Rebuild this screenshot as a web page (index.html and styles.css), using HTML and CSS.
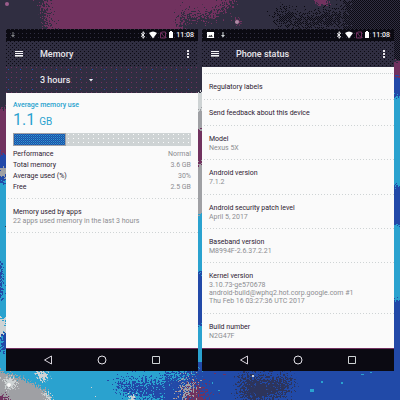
FILE: index.html
```
<!DOCTYPE html>
<html lang="en">
<head>
<meta charset="utf-8">
<meta name="viewport" content="width=device-width, initial-scale=1">
<title>Memory and phone status</title>
<link rel="stylesheet" href="styles.css">
</head>
<body>
<svg class="wallpaper" viewBox="0 0 400 400" preserveAspectRatio="xMidYMid slice" aria-hidden="true">
  <defs>
    <filter id="grain" x="-10%" y="-10%" width="120%" height="120%">
      <feTurbulence type="fractalNoise" baseFrequency="0.55" numOctaves="3" seed="4" result="n"/>
      <feDisplacementMap in="SourceGraphic" in2="n" scale="42" xChannelSelector="R" yChannelSelector="G"/>
    </filter>
    <filter id="fine" x="-10%" y="-10%" width="120%" height="120%">
      <feTurbulence type="fractalNoise" baseFrequency="0.6" numOctaves="2" seed="9" result="n"/>
      <feDisplacementMap in="SourceGraphic" in2="n" scale="14" xChannelSelector="R" yChannelSelector="G"/>
    </filter>
    <pattern id="check" width="2" height="2" patternUnits="userSpaceOnUse">
      <path d="M0 0h1v1H0zM1 1h1v1H1z" fill="#0b0a12"/>
    </pattern>
    <mask id="shade" maskUnits="userSpaceOnUse" x="200" y="0" width="200" height="60">
      <g filter="url(#grain)" fill="#fff">
        <path d="M350-30H430V80H352L342 20z"/>
        <path d="M278 8L300 16 338 10 342 26 300 28 276 24z"/>
      </g>
    </mask>
  </defs>
  <rect width="400" height="400" fill="#302e41"/>
  <g filter="url(#grain)">
    <path d="M42-20H184L182 22 174 50H50z" fill="#71305f"/>
    <path d="M184-20H236L228 8 198 18 180 12z" fill="#71305f"/>
  </g>
  <rect x="200" width="200" height="60" fill="url(#check)" mask="url(#shade)"/>
  <g filter="url(#fine)">
    <path d="M-10 108H10V160H-10z" fill="#71305f"/>
    <path d="M-10 154H10V186H-10z" fill="#214aa8"/>
    <path d="M-10 182H10V420H-10z" fill="#2aa2cf"/>
    <path d="M-10 262H2V300H-10zM2 332H10V352H2z" fill="#214aa8"/>
    <path d="M-10 168H8V176H-10z" fill="#9fa0a4"/>
    <path d="M190 92H210V132H190z" fill="#ced3d4"/>
    <path d="M190 110H210V132H190zM190 163H210V215H190z" fill="#9fa0a4"/>
    <path d="M190 130H210V164H190z" fill="#71305f"/>
    <path d="M190 214H210V375H190z" fill="#2aa2cf"/>
    <path d="M190 272H210V325H190z" fill="#214aa8"/>
    <path d="M390 62H410V80H390z" fill="#71305f"/>
    <path d="M390 77H410V100H390z" fill="#214aa8"/>
    <path d="M390 97H410V310H390z" fill="#2aa2cf"/>
    <path d="M390 185H410V225H390zM390 300H410V380H390z" fill="#214aa8"/>
  </g>
  <path d="M-10 362H190V410H-10z" fill="#2aa2cf"/>
  <path d="M165 362H410V410H165z" fill="#214aa8"/>
  <g filter="url(#grain)">
    <path d="M116 382H205V398L165 401 125 393z" fill="#214aa8"/>
    <path d="M150 366H200L175 379z" fill="#2aa2cf"/>
    <path d="M180 386L192 378 196 396 184 402z" fill="#9fa0a4"/>
    <path d="M192 388L202 382 208 410H180z" fill="#71305f"/>
    <path d="M242 374L262 380 290 376 288 392 258 402 240 398z" fill="#302e41" opacity=".75"/>
  </g>
  <g filter="url(#fine)">
    <path d="M-10 369L14 375 46 390 58 410H-10z" fill="#9fa0a4"/>
    <path d="M2 378L14 379 18 386 8 390zM36 370L48 372 46 382 38 378zM42 392L52 396 50 404z" fill="#ced3d4"/>
    <path d="M-10 389L8 398 14 410H-10z" fill="#71305f"/>
    <path d="M-10 318H6V334H-10z" fill="#ced3d4"/>
    <circle cx="238" cy="22" r="3" fill="#71305f"/>
    <circle cx="214" cy="15" r="3" fill="#71305f"/>
    <path d="M312-4H328V5H318z" fill="#71305f"/>
    <circle cx="132" cy="398" r="3" fill="#ced3d4"/>
  </g>
  <circle cx="9" cy="385" r="2" fill="#fafafa"/>
  <circle cx="7" cy="4" r="2" fill="#9c5d8c"/>
  <circle cx="237" cy="22" r="2" fill="#b08aa6"/>
  <path d="M310 389h4v3h-4zM321 381h2v2h-2zM341 382h2v2h-2zM370 372h2v1h-2zM361 374h3v1h-3zM218 390h2v1h-2zM212 382h1v2h-1z" fill="#2aa2cf"/>
  <path d="M252 375h2v2h-2zM91 387h1v1h-1zM95 396h1v1h-1z" fill="#ced3d4"/>
  <path d="M214 373h2v1h-2zM223 374h3v1h-3zM219 393h1v1h-1zM207 391h1v1h-1z" fill="#71305f"/>
</svg>

<svg class="sprite" aria-hidden="true">
  <symbol id="i-bt" viewBox="0 0 6 8"><path d="M1 2.3L4.7 5.7 3 7.3V.7L4.7 2.3 1 5.7" fill="none" stroke="#f4f4f6" stroke-width="1"/></symbol>
  <symbol id="i-wifi" viewBox="0 0 8 8"><path d="M0 2Q4-1.2 8 2L4 7.5z" fill="#fff"/></symbol>
  <symbol id="i-sim" viewBox="0 0 6 8"><path d="M.5 7V2L2 1H5.500V7zM.5 1.500L5.500 7" fill="none" stroke="#71305f" stroke-width="1"/></symbol>
  <symbol id="i-batt" viewBox="0 0 4 8"><path d="M0 1H1V0H3V1H4V7H0z" fill="#fff"/></symbol>
  <symbol id="i-down" viewBox="0 0 4 8"><path d="M1.500 1H2.500V4H4L2 6.500 0 4H1.500z" fill="#ced3d4"/></symbol>
  <symbol id="i-pic" viewBox="0 0 7 8"><path d="M0 1H7V7H0zM1.200 5.800H5.800L4.300 3.800 3.200 5 2.400 4.300z" fill="#fff" fill-rule="evenodd"/></symbol>
  <symbol id="i-menu" viewBox="0 0 8 8"><path d="M0 1H8V2H0zM0 3H8V4H0zM0 5H8V6H0z" fill="#f4f4f6"/><path d="M0 6H8V7H0z" fill="#9fa0a4"/></symbol>
  <symbol id="i-more" viewBox="0 0 4 8"><path d="M1 0H3V2H1zM1 3H3V5H1zM1 6H3V8H1z" fill="#e6e3e8"/></symbol>
  <symbol id="i-back" viewBox="0 0 10 10"><path d="M8.500 1V9L1.500 5z" fill="none" stroke="#d9d4dc" stroke-width="1"/></symbol>
  <symbol id="i-home" viewBox="0 0 10 10"><circle cx="5" cy="5" r="4" fill="none" stroke="#e4e2e8" stroke-width="1"/></symbol>
  <symbol id="i-recent" viewBox="0 0 10 10"><path d="M1.500 1.500H8.500V8.500H1.500z" fill="none" stroke="#ced3d4" stroke-width="1"/></symbol>
</svg>

<main class="phones">
  <section class="phone" aria-label="Memory">
    <div class="status">
      <svg class="s-down dim"><use href="#i-down"/></svg>
      <span class="status-right">
        <svg class="s-bt"><use href="#i-bt"/></svg>
        <svg class="s-wifi"><use href="#i-wifi"/></svg>
        <svg class="s-sim"><use href="#i-sim"/></svg>
        <svg class="s-batt"><use href="#i-batt"/></svg>
        <time>11:08</time>
      </span>
    </div>
    <header class="toolbar">
      <button type="button" aria-label="Menu"><svg class="s-menu"><use href="#i-menu"/></svg></button>
      <h1>Memory</h1>
      <button type="button" aria-label="More options"><svg class="s-more"><use href="#i-more"/></svg></button>
    </header>
    <div class="period">
      <select aria-label="Period"><option>3 hours</option></select>
      <svg class="caret" viewBox="0 0 4 3" aria-hidden="true"><path d="M0 0H4L2 2.500z" fill="#f4f4f6"/></svg>
    </div>
    <div class="content">
      <div class="summary">
        <h2>Average memory use</h2>
        <p class="amount">1.1 <small>GB</small></p>
        <div class="bar" role="img" aria-label="30% used"><div class="fill"></div></div>
        <table>
          <tr><th scope="row">Performance</th><td>Normal</td></tr>
          <tr><th scope="row">Total memory</th><td>3.6 GB</td></tr>
          <tr><th scope="row">Average used (%)</th><td>30%</td></tr>
          <tr><th scope="row">Free</th><td>2.5 GB</td></tr>
        </table>
      </div>
      <div class="item"><h3>Memory used by apps</h3><p>22 apps used memory in the last 3 hours</p></div>
    </div>
    <nav class="nav">
      <button type="button" aria-label="Back"><svg><use href="#i-back"/></svg></button>
      <button type="button" aria-label="Home"><svg><use href="#i-home"/></svg></button>
      <button type="button" aria-label="Recent apps"><svg><use href="#i-recent"/></svg></button>
    </nav>
  </section>

  <section class="phone" aria-label="Phone status">
    <div class="status">
      <svg class="s-pic"><use href="#i-pic"/></svg>
      <svg class="s-down"><use href="#i-down"/></svg>
      <span class="status-right">
        <svg class="s-bt"><use href="#i-bt"/></svg>
        <svg class="s-wifi"><use href="#i-wifi"/></svg>
        <svg class="s-sim"><use href="#i-sim"/></svg>
        <svg class="s-batt"><use href="#i-batt"/></svg>
        <time>11:08</time>
      </span>
    </div>
    <header class="toolbar">
      <button type="button" aria-label="Menu"><svg class="s-menu"><use href="#i-menu"/></svg></button>
      <h1>Phone status</h1>
      <button type="button" aria-label="More options"><svg class="s-more"><use href="#i-more"/></svg></button>
    </header>
    <div class="content list">
      <div class="item single"><h3>Regulatory labels</h3></div>
      <div class="item single"><h3>Send feedback about this device</h3></div>
      <div class="item"><h3>Model</h3><p>Nexus 5X</p></div>
      <div class="item"><h3>Android version</h3><p>7.1.2</p></div>
      <div class="item"><h3>Android security patch level</h3><p>April 5, 2017</p></div>
      <div class="item"><h3>Baseband version</h3><p>M8994F-2.6.37.2.21</p></div>
      <div class="item"><h3>Kernel version</h3><p>3.10.73-ge570678<br>android-build@wphq2.hot.corp.google.com #1<br>Thu Feb 16 03:27:36 UTC 2017</p></div>
      <div class="item"><h3>Build number</h3><p>N2G47F</p></div>
    </div>
    <nav class="nav">
      <button type="button" aria-label="Back"><svg><use href="#i-back"/></svg></button>
      <button type="button" aria-label="Home"><svg><use href="#i-home"/></svg></button>
      <button type="button" aria-label="Recent apps"><svg><use href="#i-recent"/></svg></button>
    </nav>
  </section>
</main>
</body>
</html>
```
FILE: styles.css
```
* { box-sizing: border-box; }

:root {
  --dark: #302e41;
  --black: #0b0a12;
  --plum: #71305f;
  --cyan: #2aa2cf;
  --blue: #214aa8;
  --paper: #fafafa;
}

body {
  margin: 0;
  position: relative;
  min-height: 100vh;
  font-family: Roboto, "Liberation Sans", sans-serif;
  background: var(--dark);
}

h1, h2, h3, p { margin: 0; }
svg { display: block; }

button {
  display: block;
  padding: 0;
  border: 0;
  background: none;
}

.wallpaper {
  position: absolute;
  inset: 0;
  width: 100%;
  height: 100%;
}

.sprite {
  position: absolute;
  width: 0;
  height: 0;
}

.phones {
  position: relative;
  display: flex;
  gap: 4px;
  min-height: 100vh;
  padding: 29px 6px;
}

.phone {
  flex: 1;
  min-width: 0;
  display: flex;
  flex-direction: column;
}

/* Status bar */
.status {
  display: flex;
  align-items: center;
  gap: 7px;
  height: 12px;
  padding: 0 4px 0 5px;
  background:
    conic-gradient(at 1px 1px, transparent 75%, var(--dark) 0) 0 0 / 4px 4px,
    var(--black);
}

.s-down { width: 4px; height: 8px; }
.s-pic { width: 7px; height: 8px; }
.s-bt, .s-sim { width: 6px; height: 8px; }
.s-wifi { width: 8px; height: 8px; }
.s-batt { width: 4px; height: 8px; }
.dim { opacity: .6; }

.status-right {
  display: flex;
  align-items: center;
  gap: 3px;
  margin-left: auto;
}

.status time {
  font-size: 7px;
  font-weight: 500;
  line-height: 12px;
  color: #f4f4f6;
}

/* Toolbar */
.toolbar {
  display: flex;
  align-items: center;
  height: 26px;
  padding: 0 8px 0 9px;
  background:
    conic-gradient(at 1px 1px, transparent 75%, var(--black) 0) 0 0 / 4px 4px,
    conic-gradient(at 1px 1px, transparent 75%, var(--black) 0) 2px 2px / 4px 4px,
    var(--dark);
}

.toolbar h1 {
  flex: 1;
  margin-left: 17px;
  font-size: 9px;
  font-weight: 500;
  line-height: 12px;
  color: #e8e6ea;
}

.s-menu { width: 8px; height: 8px; }
.s-more { width: 4px; height: 8px; }

.period {
  display: flex;
  align-items: center;
  height: 26px;
  padding-left: 34px;
  background:
    conic-gradient(at 1px 1px, transparent 75%, var(--plum) 0) 0 0 / 5px 5px,
    conic-gradient(at 1px 1px, transparent 75%, var(--blue) 0) 2px 2px / 12px 10px,
    var(--dark);
}

.period select {
  width: 49px;
  padding: 0;
  border: 0;
  appearance: none;
  background: none;
  font: 500 9px/12px Roboto, "Liberation Sans", sans-serif;
  color: #e8e6ea;
}

.caret { width: 4px; height: 3px; }

/* Content */
.content {
  flex: 1;
  background: var(--paper);
}

.summary,
.item {
  padding: 0 7px;
  background: repeating-linear-gradient(90deg, #ced3d4 0 1px, transparent 1px 3px) 2px 100% / 100% 1px no-repeat;
}

.summary { padding-top: 8px; padding-bottom: 6px; }

.summary h2 {
  font-size: 7px;
  font-weight: 500;
  line-height: 8px;
  color: var(--cyan);
}

.amount {
  font-size: 16px;
  line-height: 22px;
  color: var(--cyan);
}

.amount small {
  font-size: 10px;
  line-height: 12px;
}

.bar {
  height: 13px;
  margin: 2px 0 3px;
  background:
    conic-gradient(at 1px 1px, transparent 75%, var(--paper) 0) 0 1px / 5px 4px,
    #ced3d4;
}

.fill {
  width: 30%;
  height: 100%;
  border: 1px solid #9fa0a4;
  background:
    conic-gradient(var(--blue) 25%, var(--cyan) 0 50%, var(--blue) 0 75%, #2478bd 0) 0 0 / 2px 2px;
}

table {
  width: 100%;
  border-collapse: collapse;
}

th, td {
  padding: 0;
  font-size: 7px;
  line-height: 11px;
}

th {
  font-weight: 400;
  text-align: left;
  color: #2c2030;
}

td {
  text-align: right;
  color: #8c8d91;
}

.item {
  padding-top: 8px;
  padding-bottom: 8px;
}

.item h3 {
  font-size: 7px;
  font-weight: 400;
  line-height: 10px;
  color: #2c2030;
}

.item p {
  font-size: 7px;
  line-height: 8px;
  color: #8c8d91;
}

.list {
  display: flex;
  flex-direction: column;
  padding-top: 7px;
  background:
    repeating-linear-gradient(90deg, #ced3d4 0 1px, transparent 1px 2px) 2px 6px / 100% 1px no-repeat,
    var(--paper);
}

.list .item { flex: 1 0 auto; }
.list .item:last-child { background: none; }
.list .single { flex-grow: 0; }

/* Navigation bar */
.nav {
  display: flex;
  align-items: center;
  justify-content: center;
  gap: 44px;
  height: 23px;
  border-top: 1px solid var(--plum);
  background: var(--black);
}

.nav svg { width: 10px; height: 10px; }
```
